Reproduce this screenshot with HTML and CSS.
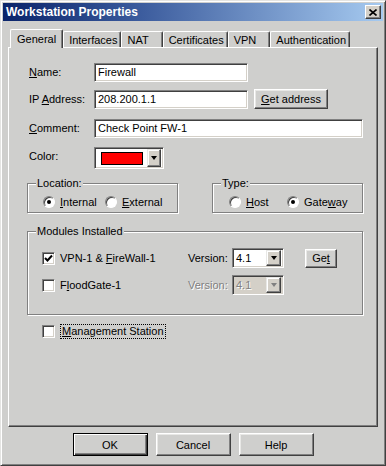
FILE: index.html
```html
<!DOCTYPE html>
<html lang="en">
<head>
    <meta charset="UTF-8">
    <title>Workstation Properties</title>
    <link rel="stylesheet" href="styles.css">
</head>
<body>
<div class="window">
    <div class="titlebar">
        <span class="title">Workstation Properties</span>
        <span class="close-btn">
            <svg width="8" height="7" viewBox="0 0 8 7"><path d="M0.5 0.5L7.5 6.5M7.5 0.5L0.5 6.5" stroke="#000" stroke-width="1.6"/></svg>
        </span>
    </div>

    <div class="tabs">
        <div class="tab active">General</div>
        <div class="tab">Interfaces</div>
        <div class="tab tab-short">NAT</div>
        <div class="tab">Certificates</div>
        <div class="tab tab-short">VPN</div>
        <div class="tab">Authentication</div>
    </div>

    <div class="panel">
        <div class="form-grid">
            <span class="field-label"><u>N</u>ame:</span>
            <div class="field"><span class="textbox textbox-short">Firewall</span></div>

            <span class="field-label">IP <u>A</u>ddress:</span>
            <div class="field">
                <span class="textbox textbox-short">208.200.1.1</span>
                <span class="btn btn-address"><span><u>G</u>et address</span></span>
            </div>

            <span class="field-label"><u>C</u>omment:</span>
            <div class="field"><span class="textbox textbox-long">Check Point FW-1</span></div>

            <span class="field-label">Color:</span>
            <div class="field">
                <span class="color-combo">
                    <span class="swatch"></span>
                    <span class="drop-btn"><span class="arrow"></span></span>
                </span>
            </div>
        </div>

        <div class="group-row">
            <fieldset class="group group-location">
                <legend>Location:</legend>
                <div class="radio-row">
                    <span class="option option-internal"><span class="radio checked"></span><span><u>I</u>nternal</span></span>
                    <span class="option"><span class="radio"></span><span><u>E</u>xternal</span></span>
                </div>
            </fieldset>
            <fieldset class="group group-type">
                <legend>Type:</legend>
                <div class="radio-row">
                    <span class="option option-host"><span class="radio"></span><span><u>H</u>ost</span></span>
                    <span class="option"><span class="radio checked"></span><span>Gate<u>w</u>ay</span></span>
                </div>
            </fieldset>
        </div>

        <fieldset class="group group-modules">
            <legend>Modules Installed</legend>
            <div class="modules-grid">
                <span class="option">
                    <span class="checkbox"><svg width="9" height="9" viewBox="0 0 9 9"><path d="M1 4L3.5 6.5L8 1.5" fill="none" stroke="#000" stroke-width="2"/></svg></span>
                    <span>VPN-1 &amp; <u>F</u>ireWall-1</span>
                </span>
                <span class="version-label">Version:</span>
                <span class="combo"><span class="combo-text">4.1</span><span class="drop-btn"><span class="arrow"></span></span></span>
                <span class="btn btn-get"><span>Ge<u>t</u></span></span>

                <span class="option"><span class="checkbox"></span><span>F<u>l</u>oodGate-1</span></span>
                <span class="version-label disabled">Version:</span>
                <span class="combo combo-disabled"><span class="combo-text">4.1</span><span class="drop-btn"><span class="arrow"></span></span></span>
                <span></span>
            </div>
        </fieldset>

        <div class="mgmt-row">
            <span class="checkbox"></span>
            <span class="focus-label"><u>M</u>anagement Station</span>
        </div>
    </div>

    <div class="buttons">
        <span class="btn btn-dialog btn-default">OK</span>
        <span class="btn btn-dialog">Cancel</span>
        <span class="btn btn-dialog">Help</span>
    </div>
</div>
</body>
</html>
```

FILE: styles.css
```css
body {
    margin: 0;
    font-family: "Liberation Sans", Arial, sans-serif;
    font-size: 11px;
    color: #000;
    background-color: #cfcfcd;
}
u {
    text-decoration-thickness: 1px;
    text-underline-offset: 1px;
}
.window {
    width: 386px;
    height: 466px;
    box-sizing: border-box;
    padding: 2px;
    border: 1px solid;
    border-color: #e4e4e2 #404040 #404040 #e4e4e2;
    box-shadow: inset 1px 1px 0 #fff, inset -1px -1px 0 #808080;
    display: flex;
    flex-direction: column;
}

/* title bar */
.titlebar {
    height: 18px;
    display: flex;
    align-items: center;
    justify-content: space-between;
    padding: 0 2px 0 3px;
    background: linear-gradient(to right, #0a246a 0%, #3a5a9c 35%, #a6caf0 100%);
}
.title {
    color: #fff;
    font-weight: bold;
    font-size: 12px;
}
.close-btn {
    width: 14px;
    height: 12px;
    display: flex;
    align-items: center;
    justify-content: center;
    background-color: #d4d0c8;
    border: 1px solid;
    border-color: #fff #404040 #404040 #fff;
    box-shadow: inset -1px -1px 0 #808080;
}

/* tabs */
.tabs {
    display: flex;
    align-items: flex-end;
    height: 18px;
    margin-top: 8px;
    padding-left: 7px;
}
.tab {
    height: 16px;
    line-height: 16px;
    box-sizing: border-box;
    padding: 0 3px 0 5px;
    border-left: 1px solid #fff;
    border-top: 1px solid #fff;
    border-right: 1px solid #404040;
    box-shadow: inset -1px 0 0 #808080;
    border-radius: 2px 2px 0 0;
}
.tab.active {
    height: 19px;
    line-height: 18px;
    margin-bottom: -1px;
    padding: 0 6px;
    position: relative;
    z-index: 1;
    background-color: #cfcfcd;
}
.tab-short {
    padding-right: 13px;
}

/* panel */
.panel {
    height: 380px;
    box-sizing: border-box;
    margin: 0 5px;
    padding: 15px 14px 0 18px;
    border: 1px solid;
    border-color: #fff #404040 #404040 #fff;
    box-shadow: inset -1px -1px 0 #808080;
}
.form-grid {
    display: grid;
    grid-template-columns: 67px 1fr;
    grid-template-rows: 27px 29px 28px 22px;
}
.field-label {
    padding-left: 2px;
    line-height: 19px;
}
.field {
    display: flex;
    align-items: flex-start;
}
.textbox, .color-combo, .combo, .checkbox {
    border: 1px solid;
    border-color: #808080 #fff #fff #808080;
    box-shadow: inset 1px 1px 0 #404040, inset -1px -1px 0 #d4d0c8;
    box-sizing: border-box;
    background-color: #fff;
}
.textbox {
    height: 19px;
    line-height: 17px;
    padding-left: 3px;
}
.textbox-short {
    width: 154px;
}
.textbox-long {
    width: 269px;
}
.btn {
    box-sizing: border-box;
    display: flex;
    align-items: center;
    justify-content: center;
    border: 1px solid;
    border-color: #fff #404040 #404040 #fff;
    box-shadow: inset -1px -1px 0 #808080, inset 1px 1px 0 #e8e8e6;
}
.btn-address {
    width: 74px;
    height: 20px;
    margin-left: 6px;
    margin-top: -1px;
}

/* color combo */
.color-combo {
    width: 70px;
    height: 22px;
    display: flex;
    align-items: center;
    padding: 0 2px 0 6px;
    gap: 4px;
}
.swatch {
    width: 44px;
    height: 13px;
    box-sizing: border-box;
    background-color: #f00;
    border: 1px solid #000;
}
.drop-btn {
    width: 15px;
    height: 18px;
    box-sizing: border-box;
    display: flex;
    align-items: center;
    justify-content: center;
    background-color: #d4d0c8;
    border: 1px solid;
    border-color: #e8e8e6 #404040 #404040 #e8e8e6;
    box-shadow: inset -1px -1px 0 #808080, inset 1px 1px 0 #fff;
}
.arrow {
    width: 0;
    height: 0;
    border-left: 3.5px solid transparent;
    border-right: 3.5px solid transparent;
    border-top: 4px solid #000;
}

/* groups */
.group {
    margin: 0;
    padding: 0;
    border: 1px solid #808080;
    box-shadow: inset 1px 1px 0 #fff, 1px 1px 0 #fff;
}
.group legend {
    margin-left: 8px;
    padding: 0 1px;
    line-height: 13px;
    background-color: #cfcfcd;
}
.group-row {
    display: flex;
    justify-content: space-between;
    margin-top: 8px;
}
.group-location, .group-type {
    width: 151px;
    box-sizing: border-box;
}
.radio-row {
    display: flex;
    align-items: center;
    height: 13px;
    padding: 5px 0 4px 15px;
}
.group-type .radio-row {
    padding-left: 16px;
}
.option {
    display: flex;
    align-items: center;
    gap: 5px;
}
.option-internal {
    width: 62px;
}
.option-host {
    width: 58px;
}
.radio {
    width: 12px;
    height: 12px;
    box-sizing: border-box;
    border-radius: 50%;
    border: 1px solid;
    border-color: #808080 #fff #fff #808080;
    box-shadow: inset 1px 1px 0 #404040;
    background-color: #fff;
    display: flex;
    align-items: center;
    justify-content: center;
}
.radio.checked::after {
    content: "";
    width: 4px;
    height: 4px;
    border-radius: 50%;
    background-color: #000;
}

.group-modules {
    margin-top: 12px;
}
.modules-grid {
    display: grid;
    grid-template-columns: 146px 44px 52px 53px;
    grid-template-rows: 20px 20px;
    row-gap: 7px;
    align-items: center;
    padding: 10px 0 19px 14px;
}
.checkbox {
    width: 13px;
    height: 13px;
    display: flex;
    align-items: center;
    justify-content: center;
    flex-shrink: 0;
}
.version-label {
    line-height: 20px;
}
.disabled {
    color: #808080;
    text-shadow: 1px 1px 0 #fff;
}
.combo {
    height: 20px;
    display: flex;
    align-items: center;
    justify-content: space-between;
    padding: 0 2px 0 3px;
}
.combo .drop-btn {
    height: 16px;
}
.combo-disabled {
    background-color: #d4d0c8;
    color: #808080;
}
.combo-disabled .combo-text {
    text-shadow: 1px 1px 0 #fff;
}
.combo-disabled .arrow {
    border-top-color: #808080;
}
.btn-get {
    width: 32px;
    height: 19px;
    margin-left: 21px;
}

.mgmt-row {
    display: flex;
    align-items: center;
    gap: 5px;
    margin: 9px 0 0 15px;
}
.focus-label {
    border: 1px dotted #000;
    padding: 0 1px;
    line-height: 13px;
}

/* bottom buttons */
.buttons {
    display: flex;
    justify-content: center;
    gap: 8px;
    margin-top: 6px;
}
.btn-dialog {
    width: 75px;
    height: 23px;
}
.btn-default {
    border: 1px solid #000;
    box-shadow: inset 1px 1px 0 #fff, inset -1px -1px 0 #404040, inset -2px -2px 0 #808080;
}
```
